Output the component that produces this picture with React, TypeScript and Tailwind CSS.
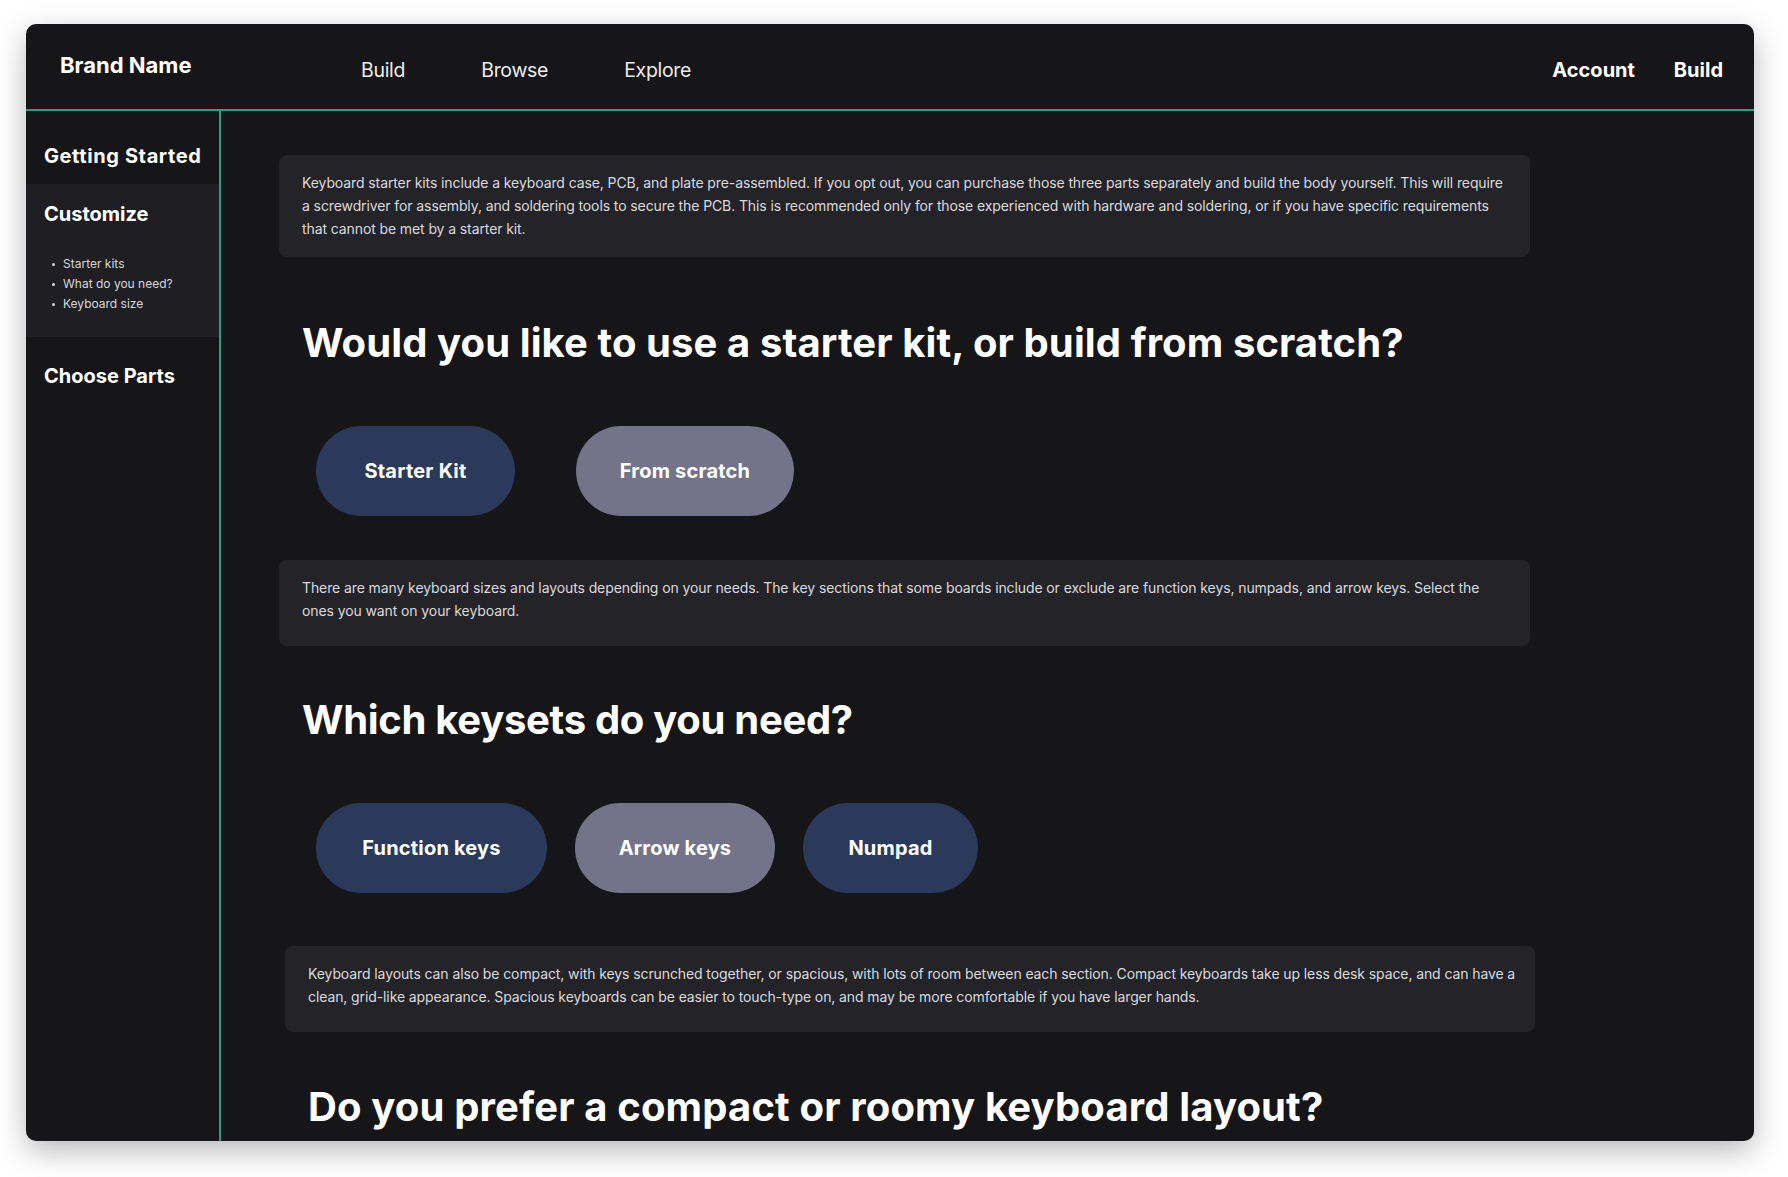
import React from "react";

const font = { fontFamily: "Inter, 'Noto Sans', sans-serif" };

function InfoBox({ children, className }: { children: React.ReactNode; className: string }) {
  return (
    <div className={"rounded-[8px] bg-[#242428] pl-[23px] pr-[16px] pt-[16px] text-[14px] leading-[23px] tracking-[-0.1px] text-[#dadade] " + className}>
      {children}
    </div>
  );
}

function Pill({ label, tone, w }: { label: string; tone: "blue" | "gray"; w: string }) {
  return (
    <div
      className={
        "flex h-[90px] items-center justify-center rounded-full text-[20px] font-bold tracking-[0.2px] text-white " +
        w +
        " " +
        (tone === "blue" ? "bg-[#2b3a5b]" : "bg-[#747389]")
      }
    >
      {label}
    </div>
  );
}

export default function App() {
  return (
    <div className="h-[1177px] w-full overflow-hidden bg-white pl-[26px] pt-[24px]" style={font}>
      <div className="flex h-[1117px] w-[1728px] flex-col overflow-hidden rounded-[10px] bg-[#161618] shadow-[0_10px_30px_rgba(0,0,0,0.28)]">
        {/* Header */}
        <header className="flex h-[87px] shrink-0 items-start border-b-2 border-[#2a9d8a] text-white">
          <div className="w-[335px] shrink-0 pl-[34px] pt-[27px] text-[22px] font-bold leading-[28px]">
            Brand Name
          </div>
          <nav className="flex gap-[76px] pt-[32px] text-[19.5px] leading-[28px] tracking-[-0.3px] text-[#ececef]">
            <span>Build</span>
            <span>Browse</span>
            <span>Explore</span>
          </nav>
          <div className="ml-auto flex gap-[39px] pr-[31px] pt-[32px] text-[20px] font-bold leading-[28px]">
            <span>Account</span>
            <span>Build</span>
          </div>
        </header>

        {/* Body */}
        <div className="flex min-h-0 flex-1">
          <aside className="w-[195px] shrink-0 border-r-2 border-[#2a9d8a] text-white">
            <div className="h-[73px] pl-[18px] pt-[31px] text-[20px] font-bold leading-[28px] tracking-[0.6px]">Getting Started</div>
            <div className="h-[153px] bg-[#1f1f23] pl-[18px] pt-[16px]">
              <div className="text-[20px] font-bold leading-[28px]">Customize</div>
              <ul className="mt-[26px] text-[12px] leading-[20px] text-[#d6d6da]">
                {["Starter kits", "What do you need?", "Keyboard size"].map((t) => (
                  <li key={t} className="flex items-center">
                    <span className="ml-[8px] h-[3px] w-[3px] rounded-full bg-[#d6d6da]" />
                    <span className="ml-[8px]">{t}</span>
                  </li>
                ))}
              </ul>
            </div>
            <div className="pl-[18px] pt-[25px] text-[20px] font-bold leading-[28px]">Choose Parts</div>
          </aside>

          <main className="min-w-0 flex-1 pl-[58px] pt-[44px] text-white">
            <InfoBox className="h-[102px] w-[1251px]">
              Keyboard starter kits include a keyboard case, PCB, and plate pre-assembled. If you opt out, you can purchase those three parts separately and build the body yourself. This will require a screwdriver for assembly, and soldering tools to secure the PCB. This is recommended only for those experienced with hardware and soldering, or if you have specific requirements that cannot be met by a starter kit.
            </InfoBox>

            <h1 className="ml-[23px] mt-[62px] text-[40px] font-bold leading-[48px] tracking-[0.1px]">
              Would you like to use a starter kit, or build from scratch?
            </h1>

            <div className="ml-[37px] mt-[59px] flex gap-[61px]">
              <Pill label="Starter Kit" tone="blue" w="w-[199px]" />
              <Pill label="From scratch" tone="gray" w="w-[218px]" />
            </div>

            <InfoBox className="mt-[44px] h-[86px] w-[1251px]">
              There are many keyboard sizes and layouts depending on your needs. The key sections that some boards include or exclude are function keys, numpads, and arrow keys. Select the ones you want on your keyboard.
            </InfoBox>

            <h2 className="ml-[23px] mt-[50px] text-[40px] font-bold leading-[48px] tracking-[-0.3px]">
              Which keysets do you need?
            </h2>

            <div className="ml-[37px] mt-[59px] flex gap-[28px]">
              <Pill label="Function keys" tone="blue" w="w-[231px]" />
              <Pill label="Arrow keys" tone="gray" w="w-[200px]" />
              <Pill label="Numpad" tone="blue" w="w-[175px]" />
            </div>

            <InfoBox className="ml-[6px] mt-[53px] h-[86px] w-[1250px]">
              Keyboard layouts can also be compact, with keys scrunched together, or spacious, with lots of room between each section. Compact keyboards take up less desk space, and can have a clean, grid-like appearance. Spacious keyboards can be easier to touch-type on, and may be more comfortable if you have larger hands.
            </InfoBox>

            <h2 className="ml-[29px] mt-[51px] text-[40px] font-bold leading-[48px] tracking-[0.15px]">
              Do you prefer a compact or roomy keyboard layout?
            </h2>
          </main>
        </div>
      </div>
    </div>
  );
}
